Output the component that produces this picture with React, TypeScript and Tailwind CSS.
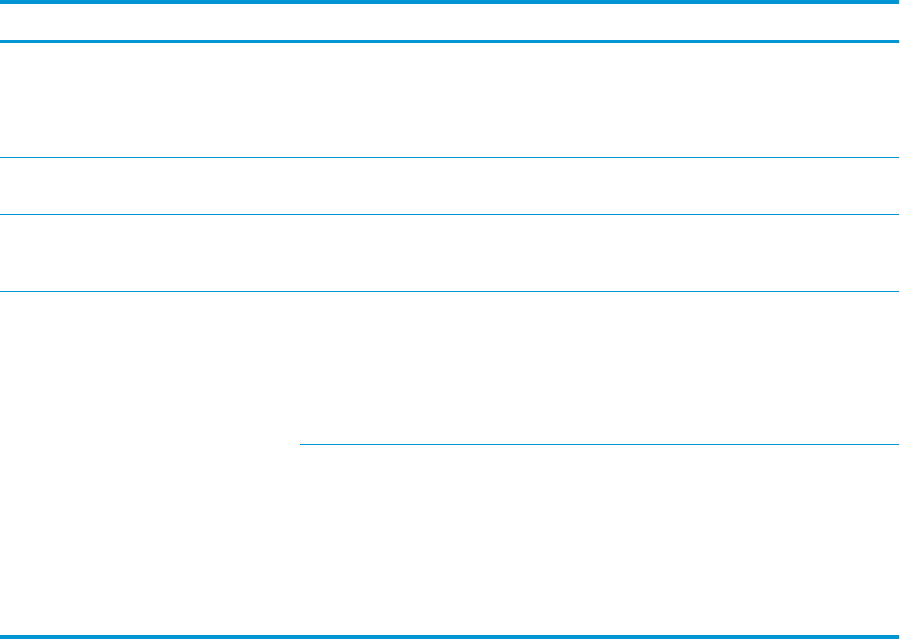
import React from 'react';

export default function App() {
  return (
    <div className="w-[900px] h-[639px] bg-white overflow-hidden">
      <div className="w-[899px] flex flex-col">
        {/* Header */}
        <div className="h-[43px] border-t-4 border-b-[3px] border-[#0096d6]" />

        {/* Rows */}
        <div className="h-[115px] border-b border-[#0096d6]" />
        <div className="h-[57px] border-b border-[#0096d6]" />
        <div className="h-[77px] border-b border-[#0096d6]" />

        {/* Last row with split right column */}
        <div className="flex h-[347px] border-b-4 border-[#0096d6]">
          <div className="w-[300px]" />
          <div className="flex-1 flex flex-col">
            <div className="h-[153px] border-b border-[#0096d6]" />
            <div className="flex-1" />
          </div>
        </div>
      </div>
    </div>
  );
}
